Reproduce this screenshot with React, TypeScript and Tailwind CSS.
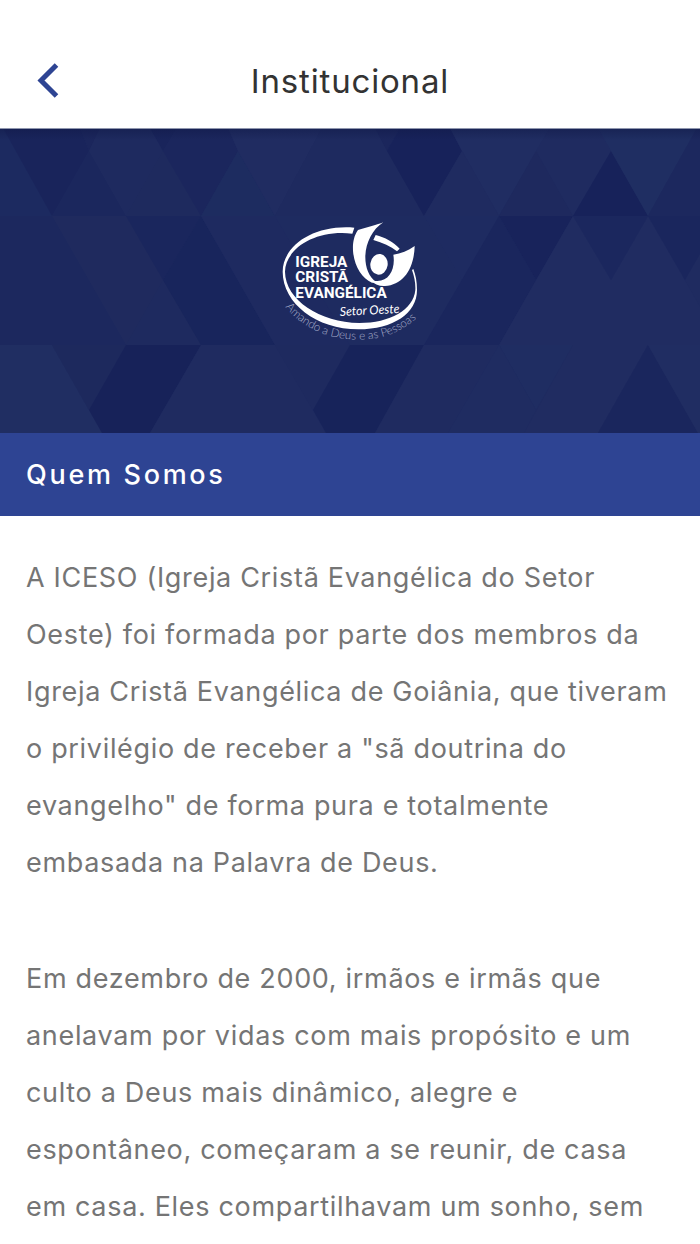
const facets: [string, string][] = [
  ['0,0 3,0 52,88 0,88', '#1c2a60'],
  ['3,0 80,0 89,23 52,88', '#19245b'],
  ['80,0 100,0 89,23', '#1b265c'],
  ['89,23 126,88 52,88', '#1b275d'],
  ['100,0 150,0 163,23 126,88 89,23', '#1e2a5f'],
  ['150,0 177,0 163,23', '#19245b'],
  ['163,23 201,88 126,88', '#1e2a5e'],
  ['177,0 228,0 238,23 201,88 163,23', '#1b265d'],
  ['238,23 275,88 201,88', '#1d2c60'],
  ['228,0 322,0 275,88 238,23', '#202c61'],
  ['322,0 375,0 424,88 275,88', '#1e2a5f'],
  ['375,0 400,0 387,23', '#1b265c'],
  ['400,0 450,0 462,23 424,88 387,23', '#17225a'],
  ['450,0 550,0 499,88 462,23', '#202d62'],
  ['462,23 499,88 424,88', '#1f2b60'],
  ['536,23 573,88 499,88', '#1e295e'],
  ['550,0 598,0 611,23 573,88 536,23', '#1f2b60'],
  ['611,23 648,88 573,88', '#17225a'],
  ['598,0 697,0 648,88 611,23', '#1f2e62'],
  ['697,0 700,0 700,88 648,88', '#1c285e'],
  ['0,88 52,88 126,217 0,217', '#1c285e'],
  ['52,88 126,88 201,217 126,217', '#1f2a5e'],
  ['126,88 201,88 163,152', '#1a265d'],
  ['163,152 201,217 126,217', '#1e2a5f'],
  ['201,88 275,217 201,217 163,152', '#18255c'],
  ['201,88 275,88 350,217 275,217', '#1e2a60'],
  ['275,88 424,88 462,152 424,217 350,217', '#1e2b60'],
  ['424,88 499,88 462,152', '#1e2b61'],
  ['499,88 573,88 536,152', '#18235b'],
  ['499,88 536,152 499,217 424,217', '#1a265d'],
  ['573,88 611,152 648,88 722,217 499,217', '#202c61'],
  ['573,88 648,88 611,152', '#1b275e'],
  ['648,88 700,88 700,126 685,152', '#1a265d'],
  ['0,217 52,217 102,305 0,305', '#202e62'],
  ['52,217 126,217 89,282', '#1d295d'],
  ['126,217 201,217 150,305 102,305 89,282', '#172259'],
  ['201,217 275,217 326,305 150,305', '#1f2b60'],
  ['275,217 350,217 313,282', '#1e2a5f'],
  ['350,217 424,217 375,305 326,305 313,282', '#17235a'],
  ['424,217 499,217 448,305 375,305', '#1f2b60'],
  ['499,217 573,217 536,282', '#1f2d62'],
  ['499,217 536,282 524,305 448,305', '#1f2c61'],
  ['573,217 648,217 598,305 524,305', '#202c61'],
  ['648,217 698,305 598,305', '#1a265d'],
  ['648,217 700,217 700,305 698,305', '#202d62'],
];

const paragraphs = [
  'A ICESO (Igreja Cristã Evangélica do Setor Oeste) foi formada por parte dos membros da Igreja Cristã Evangélica de Goiânia, que tiveram o privilégio de receber a "sã doutrina do evangelho" de forma pura e totalmente embasada na Palavra de Deus.',
  'Em dezembro de 2000, irmãos e irmãs que anelavam por vidas com mais propósito e um culto a Deus mais dinâmico, alegre e espontâneo, começaram a se reunir, de casa em casa. Eles compartilhavam um sonho, sem',
];

function HeroPattern() {
  return (
    <svg
      className="absolute inset-0 h-full w-full"
      viewBox="0 0 700 305"
      preserveAspectRatio="xMidYMid slice"
      aria-hidden="true"
    >
      <rect width="700" height="305" fill="#1f2b60" />
      {facets.map(([points, fill]) => (
        <polygon key={points} points={points} fill={fill} />
      ))}
    </svg>
  );
}

function Logo() {
  return (
    <svg className="relative h-[140px] w-[160px]" viewBox="0 0 480 420" fill="white" role="img" aria-label="Igreja Cristã Evangélica Setor Oeste">
      <path d="M253 53C130 43 38 108 38 185C38 280 140 358 265 358C370 358 441 310 441 240C441 215 437 195 430 177L426 180C433 200 437 220 436 240C430 300 360 339 268 339C150 337 46 270 45 185C46 120 130 58 247 71Z" />
      <path d="M317 75C345 82 370 96 389 116L381 124C362 108 338 98 310 90Z" />
      <path d="M340 37C323 44 290 52 264 60C251 78 248 100 249 122C252 165 274 205 306 218L320 216C296 203 285 170 286 137C288 98 307 58 340 37Z" />
      <path d="M434 108C414 123 393 131 370 134C377 176 358 216 318 213C310 213 304 211 298 209C314 222 327 229 345 228C398 225 432 179 434 108Z" />
      <ellipse cx="327" cy="163" rx="26" ry="31" transform="rotate(8 327 163)" />
      <g className="font-['Roboto',sans-serif] text-[46px] font-bold">
        <text x="76" y="170">IGREJA</text>
        <text x="76" y="217">CRISTÃ</text>
        <text x="76" y="264">EVANGÉLICA</text>
      </g>
      <text x="210" y="318" transform="rotate(-3 210 318)" className="font-['Lato',sans-serif] text-[37px] italic">
        Setor Oeste
      </text>
      <path id="tagline-arc" d="M46 291C110 367 190 388 262 389C340 389 400 367 462 304" fill="none" />
      <text className="font-['Lato',sans-serif] text-[35px] font-light" fill="#a8aecb">
        <textPath href="#tagline-arc">Amando a Deus e as Pessoas</textPath>
      </text>
    </svg>
  );
}

export default function App() {
  return (
    <div className="min-h-screen bg-white font-['Inter',sans-serif]">
      <header className="grid h-32 grid-cols-[96px_1fr_96px] items-end pb-[15px]">
        <button type="button" aria-label="Voltar" className="flex h-16 items-center pl-9">
          <svg width="24" height="36" viewBox="0 0 24 36" fill="none" stroke="#2e4493" strokeWidth="5" aria-hidden="true">
            <path d="M20.500 2L5 17.500L20.500 33" />
          </svg>
        </button>
        <h1 className="text-center text-[33px] leading-16 tracking-wide text-[#333333]">Institucional</h1>
      </header>
      <main>
        <section className="relative flex h-[305px] items-start justify-center overflow-hidden pt-[82px]">
          <HeroPattern />
          <div className="absolute inset-x-0 top-0 h-3 border-t border-[#8f96ae] bg-linear-to-b from-[#111a48]/50 to-transparent" />
          <Logo />
        </section>
        <h2 className="bg-[#2e4493] px-[26px] text-[27px] leading-[83px] font-medium tracking-widest text-white">
          Quem Somos
        </h2>
        <div className="flex flex-col gap-[59px] px-[26px] pt-[33px] text-[27px] leading-[57px] tracking-wide text-[#757575]">
          {paragraphs.map((text) => (
            <p key={text}>{text}</p>
          ))}
        </div>
      </main>
    </div>
  );
}
